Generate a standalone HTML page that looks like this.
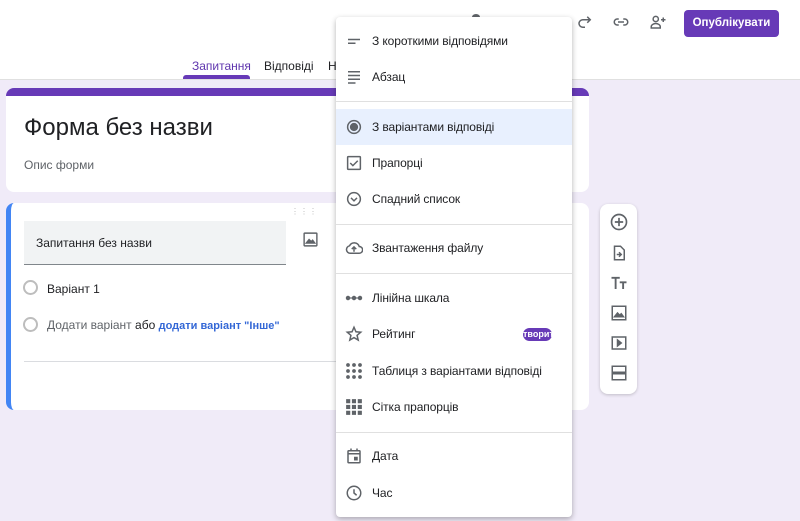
<!DOCTYPE html><html><head><meta charset="utf-8"><style>
*{box-sizing:border-box;margin:0;padding:0}
body{width:800px;height:521px;overflow:hidden;font-family:"Liberation Sans",sans-serif;background:#f0ebf8;position:relative;color:#202124}
.top{position:absolute;left:0;top:0;width:800px;height:80px;background:#fff;border-bottom:1px solid #e0e0e0}
.abs{position:absolute}
.menu{position:absolute;left:336px;top:17px;width:236px;height:500px;background:#fff;border-radius:4px;box-shadow:0 2px 6px rgba(0,0,0,.3)}
.it{position:absolute;left:0;width:236px;height:36px;display:flex;align-items:center;font-size:12px;color:#202124}
.it svg{position:absolute;left:9px;top:9px}
.it span{position:absolute;left:36px;letter-spacing:-0.1px}
.sep{position:absolute;left:0;width:236px;height:1px;background:#e0e0e0}
.tb svg{display:block;margin:8px auto 0}
</style></head><body>
<div class="top"></div>
<div class="abs" style="left:472px;top:14px;width:8px;height:6px;background:#5f6368;border-radius:50%"></div>
<div class="abs" style="left:684px;top:10px;width:95px;height:27px;background:#673ab7;border-radius:4px;color:#fff;font-size:11.5px;font-weight:bold;text-align:center;line-height:27px;white-space:nowrap">Опублікувати</div>
<svg class="abs" style="left:576px;top:13px" width="18" height="18" viewBox="0 0 24 24" fill="none" stroke="#5f6368" stroke-width="2"><path d="M18 9H9a5 5 0 0 0 0 10h3M15 5l4 4-4 4"/></svg>
<svg class="abs" style="left:612px;top:13px" width="18" height="18" viewBox="0 0 24 24" fill="none" stroke="#5f6368" stroke-width="2"><path d="M9 8H7a4 4 0 0 0 0 8h2M15 8h2a4 4 0 0 1 0 8h-2M8 12h8"/></svg>
<svg class="abs" style="left:648px;top:13px" width="20" height="18" viewBox="0 0 24 24" fill="none" stroke="#5f6368" stroke-width="2"><circle cx="9" cy="8" r="3.5"/><path d="M3 20v-2c0-2 3-4 6-4s6 2 6 4v2zM19 6v6M16 9h6"/></svg>
<div class="abs" style="left:192px;top:59px;font-size:12px;color:#5f35ae">Запитання</div>
<div class="abs" style="left:183px;top:75px;width:67px;height:4px;background:#673ab7;border-radius:3px 3px 0 0"></div>
<div class="abs" style="left:264px;top:59px;font-size:12px;color:#202124">Відповіді</div>
<div class="abs" style="left:328px;top:59px;font-size:12px">Н</div>
<div class="abs" style="left:6px;top:88px;width:583px;height:104px;background:#fff;border-radius:8px;border-top:8px solid #673ab7"></div>
<div class="abs" style="left:24px;top:114px;font-size:24px">Форма без назви</div>
<div class="abs" style="left:24px;top:158px;font-size:12px;color:#5f6368">Опис форми</div>
<div class="abs" style="left:6px;top:203px;width:583px;height:207px;background:#fff;border-radius:8px;border-left:5px solid #4285f4"></div>
<div class="abs" style="left:291px;top:207px;color:#bbb;font-size:8px;letter-spacing:1px">⋮⋮⋮</div>
<div class="abs" style="left:24px;top:221px;width:262px;height:44px;background:#f1f3f4;border-bottom:1px solid #80868b"></div>
<div class="abs" style="left:36px;top:236px;font-size:12px">Запитання без назви</div>
<svg class="abs" style="left:302px;top:231px" width="17" height="17" viewBox="0 0 24 24" fill="none" stroke="#5f6368" stroke-width="2"><rect x="3" y="3" width="18" height="18" rx="1"/><path d="M6 17l4-5 3 3 2-2 3 4z" fill="#5f6368"/></svg>
<div class="abs" style="left:23px;top:280px;width:15px;height:15px;border:2px solid #bdbdbd;border-radius:50%"></div>
<div class="abs" style="left:47px;top:282px;font-size:12px">Варіант 1</div>
<div class="abs" style="left:23px;top:317px;width:15px;height:15px;border:2px solid #bdbdbd;border-radius:50%"></div>
<div class="abs" style="left:47px;top:318px;font-size:12px;color:#5f6368">Додати варіант <span style="color:#202124">або</span> <span style="color:#3367d6;font-weight:bold;font-size:11px">додати варіант "Інше"</span></div>
<div class="abs" style="left:24px;top:361px;width:312px;height:1px;background:#dadce0"></div>
<div class="abs tb" style="left:600px;top:204px;width:37px;height:190px;background:#fff;border-radius:8px;box-shadow:0 1px 3px rgba(0,0,0,.2)">
<svg width="20" height="20" viewBox="0 0 24 24" fill="none" stroke="#5f6368" stroke-width="2"><circle cx="12" cy="12" r="9"/><path d="M12 7v10M7 12h10"/></svg>
<svg style="margin-top:12px" width="18" height="18" viewBox="0 0 24 24" fill="none" stroke="#5f6368" stroke-width="2"><path d="M6 3h8l5 5v13H6zM9 14h6M12 11l3 3-3 3"/></svg>
<svg style="margin-top:12px" width="20" height="18" viewBox="0 0 24 24" fill="none" stroke="#5f6368" stroke-width="2.5"><path d="M2 5h11M7.5 5v15M13 11h9M17.5 11v9"/></svg>
<svg style="margin-top:12px" width="18" height="18" viewBox="0 0 24 24" fill="none" stroke="#5f6368" stroke-width="2"><rect x="3" y="3" width="18" height="18"/><path d="M6 17l4-5 3 3 2-2 3 4z" fill="#5f6368"/></svg>
<svg style="margin-top:12px" width="18" height="18" viewBox="0 0 24 24" fill="none" stroke="#5f6368" stroke-width="2"><rect x="3" y="4" width="18" height="16"/><path d="M10 8l5 4-5 4z" fill="#5f6368"/></svg>
<svg style="margin-top:12px" width="18" height="18" viewBox="0 0 24 24" fill="none" stroke="#5f6368" stroke-width="2"><rect x="3" y="3" width="18" height="8"/><rect x="3" y="13" width="18" height="8"/></svg>
</div>
<div class="menu">
<div class="it" style="top:6px"><svg width="18" height="18" viewBox="0 0 24 24" stroke="#5f6368" stroke-width="2"><path d="M4 10h16M4 15h10"/></svg><span>З короткими відповідями</span></div>
<div class="it" style="top:42px"><svg width="18" height="18" viewBox="0 0 24 24" stroke="#5f6368" stroke-width="2"><path d="M4 5h16M4 10h16M4 15h16M4 20h10"/></svg><span>Абзац</span></div>
<div class="sep" style="top:84px"></div>
<div class="it" style="top:92px;background:#e8f0fe"><svg width="18" height="18" viewBox="0 0 24 24" fill="none" stroke="#5f6368" stroke-width="2"><circle cx="12" cy="12" r="8.5"/><circle cx="12" cy="12" r="4.5" fill="#5f6368"/></svg><span>З варіантами відповіді</span></div>
<div class="it" style="top:128px"><svg width="18" height="18" viewBox="0 0 24 24" fill="none" stroke="#5f6368" stroke-width="2"><rect x="3.5" y="3.5" width="17" height="17" rx="1"/><path d="M7 12l3.5 3.5L17 9"/></svg><span>Прапорці</span></div>
<div class="it" style="top:164px"><svg width="18" height="18" viewBox="0 0 24 24" fill="none" stroke="#5f6368" stroke-width="2"><circle cx="12" cy="12" r="8.5"/><path d="M8 10.5l4 4 4-4"/></svg><span>Спадний список</span></div>
<div class="sep" style="top:207px"></div>
<div class="it" style="top:213px"><svg width="18" height="18" viewBox="0 0 24 24" fill="none" stroke="#5f6368" stroke-width="2"><path d="M7 19a5 5 0 0 1-1-9.9A7 7 0 0 1 19 10a4.5 4.5 0 0 1 0 9zM12 17v-6M9 13.5l3-3 3 3"/></svg><span>Звантаження файлу</span></div>
<div class="sep" style="top:256px"></div>
<div class="it" style="top:263px"><svg width="18" height="18" viewBox="0 0 24 24" fill="#5f6368" stroke="#5f6368" stroke-width="1.5"><circle cx="4" cy="12" r="2.2"/><circle cx="12" cy="12" r="2.2"/><circle cx="20" cy="12" r="2.2"/><path d="M4 12h16"/></svg><span>Лінійна шкала</span></div>
<div class="it" style="top:299px"><svg width="18" height="18" viewBox="0 0 24 24" fill="none" stroke="#5f6368" stroke-width="2"><path d="M12 3l2.6 6 6.4.6-4.9 4.2 1.5 6.3L12 16.8 6.4 20.1l1.5-6.3L3 9.6 9.4 9z"/></svg><span>Рейтинг</span><div style="position:absolute;left:187px;top:12px;width:29px;height:13px;background:#673ab7;border-radius:7px;color:#fff;font-size:9px;font-weight:bold;text-align:center;line-height:13px;overflow:hidden;white-space:nowrap">творит</div></div>
<div class="it" style="top:336px"><svg width="18" height="18" viewBox="0 0 24 24" fill="#5f6368"><circle cx="4" cy="4" r="2.5"/><circle cx="12" cy="4" r="2.5"/><circle cx="20" cy="4" r="2.5"/><circle cx="4" cy="12" r="2.5"/><circle cx="12" cy="12" r="2.5"/><circle cx="20" cy="12" r="2.5"/><circle cx="4" cy="20" r="2.5"/><circle cx="12" cy="20" r="2.5"/><circle cx="20" cy="20" r="2.5"/></svg><span>Таблиця з варіантами відповіді</span></div>
<div class="it" style="top:372px"><svg width="18" height="18" viewBox="0 0 24 24" fill="#5f6368"><rect x="1.5" y="1.5" width="5.5" height="5.5"/><rect x="9.2" y="1.5" width="5.5" height="5.5"/><rect x="17" y="1.5" width="5.5" height="5.5"/><rect x="1.5" y="9.2" width="5.5" height="5.5"/><rect x="9.2" y="9.2" width="5.5" height="5.5"/><rect x="17" y="9.2" width="5.5" height="5.5"/><rect x="1.5" y="17" width="5.5" height="5.5"/><rect x="9.2" y="17" width="5.5" height="5.5"/><rect x="17" y="17" width="5.5" height="5.5"/></svg><span>Сітка прапорців</span></div>
<div class="sep" style="top:415px"></div>
<div class="it" style="top:421px"><svg width="18" height="18" viewBox="0 0 24 24" fill="none" stroke="#5f6368" stroke-width="2"><rect x="4" y="5" width="16" height="16" rx="1"/><path d="M4 9h16M8 2v4M16 2v4"/><rect x="13" y="14" width="3" height="3" fill="#5f6368"/></svg><span>Дата</span></div>
<div class="it" style="top:458px"><svg width="18" height="18" viewBox="0 0 24 24" fill="none" stroke="#5f6368" stroke-width="2"><circle cx="12" cy="12" r="9"/><path d="M12 7v5l3.5 3"/></svg><span>Час</span></div>
</div>
</body></html>
